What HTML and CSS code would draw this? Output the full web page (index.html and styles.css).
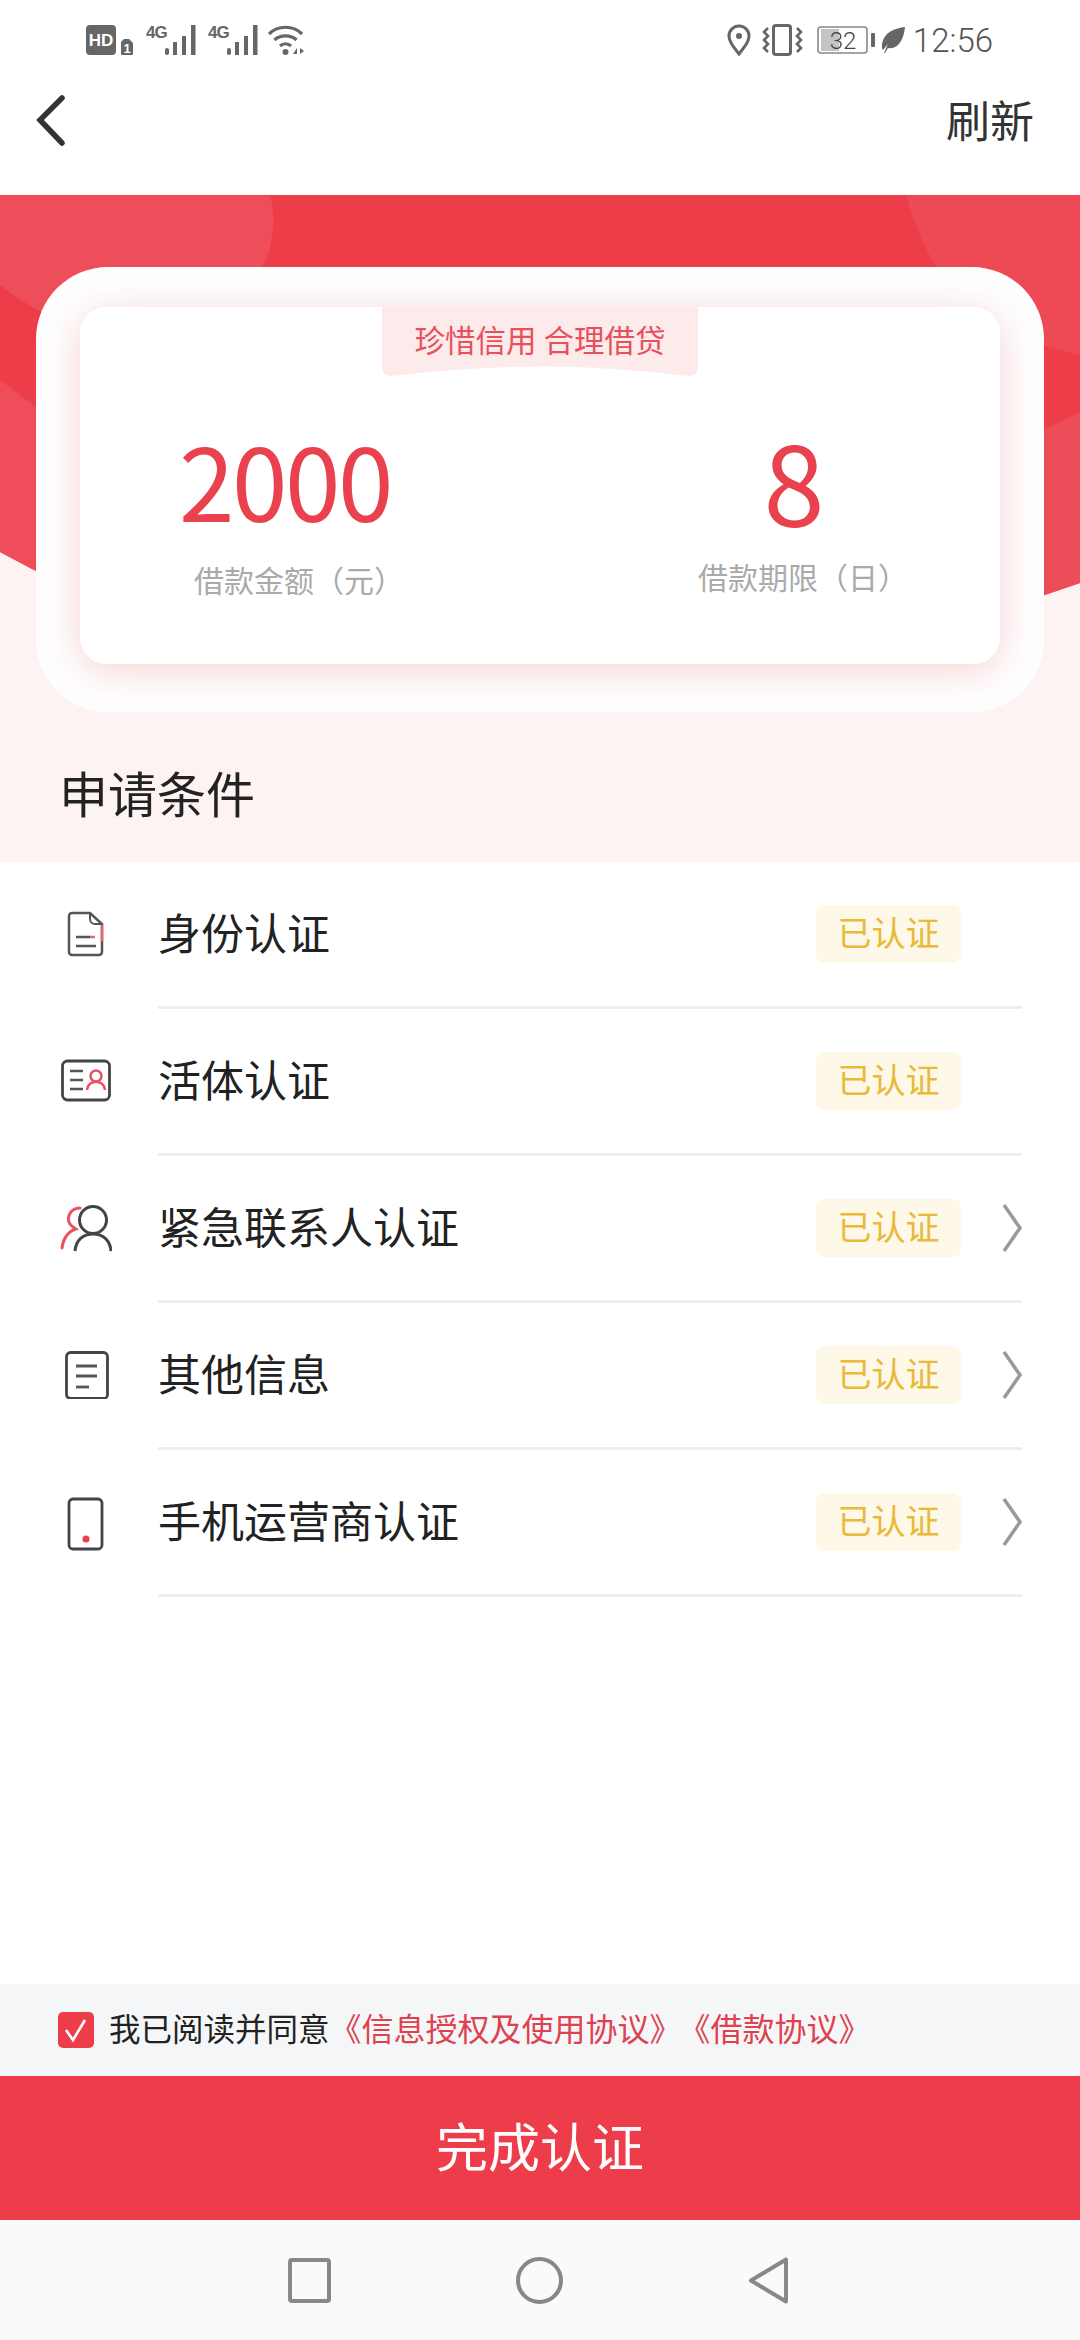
FILE: index.html
```html
<!DOCTYPE html>
<html lang="zh-CN">
<head>
<meta charset="utf-8">
<title>申请条件</title>
<link rel="stylesheet" href="styles.css">
</head>
<body>
<div class="page">
  <div class="status">
    <div class="status-left">
      <svg class="si" width="48" height="32" viewBox="0 0 48 32"><rect x="0" y="1" width="30" height="30" rx="4" fill="#666"/><text x="15" y="22" class="hd">HD</text><path d="M38 15h5l4 4v11a1 1 0 0 1-1 1H36a1 1 0 0 1-1-1V18z" fill="#666"/><text x="41" y="28.5" class="sim">1</text></svg>
      <svg class="si sig" width="50" height="32" viewBox="0 0 50 32"><text x="0" y="14" class="g4">4G</text><rect x="19" y="24" width="4" height="7" rx="2" fill="#666"/><rect x="27" y="18" width="4" height="13" fill="#666"/><rect x="36" y="12" width="4" height="19" fill="#666"/><rect x="45" y="1" width="4.500" height="30" fill="#666"/></svg>
      <svg class="si sig2" width="50" height="32" viewBox="0 0 50 32"><text x="0" y="14" class="g4">4G</text><rect x="19" y="24" width="4" height="7" rx="2" fill="#666"/><rect x="27" y="18" width="4" height="13" fill="#666"/><rect x="36" y="12" width="4" height="19" fill="#666"/><rect x="45" y="1" width="4.500" height="30" fill="#666"/></svg>
      <svg class="si wifi" width="37" height="32" viewBox="0 0 37 32"><path d="M2 10C11 1 26 1 35 10M7.500 16C13 10.500 24 10.500 29.500 16M13 22c3-3 8-3 11 0" fill="none" stroke="#666" stroke-width="3.200"/><circle cx="18.500" cy="28" r="3" fill="#666"/><path d="M26 30l4-6v6zM31 24v7M33 24l4 3-4 3z" fill="#666"/></svg>
    </div>
    <div class="status-right">
      <svg width="24" height="32" viewBox="0 0 24 32"><path d="M12 30C5 21 2 17 2 12a10 10 0 0 1 20 0c0 5-3 9-10 18z" fill="none" stroke="#666" stroke-width="3"/><circle cx="12" cy="12" r="3" fill="#666"/></svg>
      <svg class="vib" width="41" height="32" viewBox="0 0 41 32"><rect x="11.500" y="1.500" width="17" height="29" rx="2.500" fill="none" stroke="#666" stroke-width="3"/><path d="M6 4L2 8l4 4-4 4 4 4-4 4 4 4M35 4l4 4-4 4 4 4-4 4 4 4-4 4" fill="none" stroke="#666" stroke-width="2.600"/></svg>
      <svg class="bat" width="58" height="32" viewBox="0 0 58 32"><rect x="4" y="5" width="18" height="22" fill="#c4c4c4"/><rect x="1" y="3" width="49" height="26" rx="3" fill="none" stroke="#888" stroke-width="1.600"/><text x="26" y="25" class="batt">32</text><rect x="54" y="9" width="4" height="14" rx="1" fill="#666"/></svg>
      <svg class="leaf" width="24" height="32" viewBox="0 0 24 32"><path d="M24 3C14 4 3 8 1 20c-.5 3 0 5 1 6l5-6c-2 4-3 7-4 9h1l3-5c10 2 16-9 17-21z" fill="#666"/></svg>
      <span class="time">12:56</span>
    </div>
  </div>

  <header class="topbar">
    <svg class="back" width="36" height="54" viewBox="0 0 36 54"><path d="M30 3L8 25l22 23" fill="none" stroke="#333" stroke-width="5.500" stroke-linecap="round" stroke-linejoin="miter"/></svg>
    <span class="refresh">刷新</span>
  </header>

  <section class="hero">
    <svg class="hero-bg" width="1080" height="667" viewBox="0 0 1080 667">
      <defs><clipPath id="redclip"><path d="M0 0H1080V388Q454 607 0 357Z"/></clipPath></defs>
      <g clip-path="url(#redclip)">
        <rect width="1080" height="667" fill="#ec3d49"/>
        <path d="M0 0H270C278 30 270 60 262 72C200 170 90 160 0 90Z" fill="#ed4e5a"/>
        <path d="M0 185L36 212V420H0Z" fill="#ee4d59"/>
        <path d="M906 0H1080V160L1043 150C980 130 930 90 906 0Z" fill="#ed4a56"/>
        <path d="M1043 235L1080 217V420H1043Z" fill="#ed4d59"/>
      </g>
    </svg>
    <div class="panel">
      <div class="card">
        <div class="tag">
          <svg class="tag-bg" width="316" height="69" viewBox="0 0 316 69"><path d="M0 0H316V60Q316 69 306 69Q158 50 10 69Q0 69 0 60Z" fill="#fdeaea"/></svg>
          <span class="tag-text">珍惜信用 合理借贷</span>
        </div>
        <div class="stats">
          <div class="stat">
            <div class="num">2000</div>
            <div class="label label-left">借款金额（元）</div>
          </div>
          <div class="stat stat-right">
            <div class="num num-big">8</div>
            <div class="label">借款期限（日）</div>
          </div>
        </div>
      </div>
    </div>
    <h2 class="title">申请条件</h2>
  </section>

  <ul class="list">
    <li class="row">
      <svg class="icon" width="52" height="48" viewBox="0 0 52 48"><path d="M12 3H30L42 14V42a3 3 0 0 1-3 3H12a3 3 0 0 1-3-3V6a3 3 0 0 1 3-3z" fill="none" stroke="#555" stroke-width="2.500"/><path d="M30 3V9a5 5 0 0 0 5 5h7" fill="none" stroke="#555" stroke-width="2"/><path d="M16 27H30M16 36H36" stroke="#555" stroke-width="2.500"/><path d="M30 27H35M42 15V31" stroke="#e9646e" stroke-width="2.500"/></svg>
      <div class="row-body"><span class="row-name">身份认证</span><span class="badge">已认证</span><span class="slot"></span></div>
    </li>
    <li class="row">
      <svg class="icon" width="52" height="48" viewBox="0 0 52 48"><rect x="2.500" y="4" width="47" height="39" rx="5" fill="none" stroke="#444" stroke-width="2.800"/><path d="M10 14H23M10 23H23M10 32H23" stroke="#555" stroke-width="2.500"/><circle cx="36" cy="19" r="5.500" fill="none" stroke="#e9525e" stroke-width="2.500"/><path d="M27 33c1-11 17-11 18 0" fill="none" stroke="#e9525e" stroke-width="2.500"/></svg>
      <div class="row-body"><span class="row-name">活体认证</span><span class="badge">已认证</span><span class="slot"></span></div>
    </li>
    <li class="row">
      <svg class="icon" width="52" height="48" viewBox="0 0 52 48"><circle cx="33" cy="16" r="13.500" fill="none" stroke="#444" stroke-width="3"/><path d="M15 47C16 36 23 30 33 30S50 36 51 47" fill="none" stroke="#444" stroke-width="3"/><path d="M20 4C10 4 6 14 10 20c2 3 5 4 6 5C8 27 3 35 2 44" fill="none" stroke="#e9525e" stroke-width="3" stroke-linecap="round"/></svg>
      <div class="row-body"><span class="row-name">紧急联系人认证</span><span class="badge">已认证</span><span class="slot"><svg class="chev" width="20" height="50" viewBox="0 0 20 50"><path d="M2 2L18 25L2 48" fill="none" stroke="#9a9a9a" stroke-width="3.500"/></svg></span></div>
    </li>
    <li class="row">
      <svg class="icon" width="52" height="48" viewBox="0 0 52 48"><rect x="6.500" y="1.500" width="41" height="46" rx="4" fill="none" stroke="#444" stroke-width="2.800"/><path d="M16 15H37M16 25H37" stroke="#555" stroke-width="2.800"/><path d="M16 36H29" stroke="#555" stroke-width="2.800"/></svg>
      <div class="row-body"><span class="row-name">其他信息</span><span class="badge">已认证</span><span class="slot"><svg class="chev" width="20" height="50" viewBox="0 0 20 50"><path d="M2 2L18 25L2 48" fill="none" stroke="#9a9a9a" stroke-width="3.500"/></svg></span></div>
    </li>
    <li class="row">
      <svg class="icon phone" width="52" height="54" viewBox="0 0 52 54"><rect x="9" y="2" width="33" height="50" rx="4" fill="none" stroke="#444" stroke-width="2.800"/><circle cx="26" cy="42" r="3.500" fill="#e9414e"/></svg>
      <div class="row-body"><span class="row-name">手机运营商认证</span><span class="badge">已认证</span><span class="slot"><svg class="chev" width="20" height="50" viewBox="0 0 20 50"><path d="M2 2L18 25L2 48" fill="none" stroke="#9a9a9a" stroke-width="3.500"/></svg></span></div>
    </li>
  </ul>

  <div class="agree">
    <svg class="check" width="36" height="36" viewBox="0 0 36 36"><rect width="36" height="36" rx="5" fill="#ee3d4a"/><path d="M8 18l7 10L27 8" fill="none" stroke="#fff" stroke-width="2.600"/></svg>
    <span class="agree-text">我已阅读并同意</span><span class="agree-link">《信息授权及使用协议》</span><span class="agree-link agree-link-2">《借款协议》</span>
  </div>
  <button class="submit"><span class="submit-text">完成认证</span></button>
  <nav class="navbar">
    <svg width="43" height="46" viewBox="0 0 43 46"><rect x="2" y="3" width="39" height="41" rx="2" fill="none" stroke="#888" stroke-width="4"/></svg>
    <svg width="47" height="47" viewBox="0 0 47 47"><circle cx="23.500" cy="23.500" r="21.500" fill="none" stroke="#888" stroke-width="4"/></svg>
    <svg width="41" height="47" viewBox="0 0 41 47"><path d="M38 2.500V44.500L3 23.500Z" fill="none" stroke="#888" stroke-width="4" stroke-linejoin="round"/></svg>
  </nav>
</div>
</body>
</html>
```
FILE: styles.css
```css
* { box-sizing: border-box; }
html, body { margin: 0; padding: 0; }
body { font-family: "Noto Sans CJK SC", "Noto Sans", sans-serif; background: #fff; color: #222; }
.page { width: 1080px; height: 2340px; display: flex; flex-direction: column; overflow: hidden; background: #fff; }

.status { height: 80px; flex: none; display: flex; justify-content: space-between; align-items: center; padding: 0 87px 0 86px; }
.status-left, .status-right { display: flex; align-items: center; }
.si { display: block; }
.sig { margin-left: 12px; }
.sig2 { margin-left: 12px; }
.wifi { margin-left: 9px; }
.status-right svg { display: block; }
.vib { margin-left: 11px; }
.bat { margin-left: 14px; }
.leaf { margin-left: 6px; }
.time { font-family: Roboto, sans-serif; font-size: 33px; font-weight: 300; color: #555; margin-left: 8px; line-height: 32px; padding-top: 2px; }
.hd { font-family: "Liberation Sans", sans-serif; font-size: 17px; font-weight: 700; fill: #fff; text-anchor: middle; }
.sim { font-family: "Liberation Sans", sans-serif; font-size: 13px; font-weight: 700; fill: #fff; text-anchor: middle; }
.g4 { font-family: "Liberation Sans Narrow", "Liberation Sans", sans-serif; font-size: 17px; font-weight: 700; fill: #666; letter-spacing: -1px; }
.batt { font-family: Roboto, sans-serif; font-size: 24px; font-weight: 300; fill: #444; text-anchor: middle; }

.topbar { height: 115px; flex: none; display: flex; justify-content: space-between; align-items: flex-start; padding: 9px 46px 0 32px; }
.back { display: block; margin-top: 6px; }
.refresh { font-size: 44px; line-height: 60px; color: #333; }

.hero { position: relative; height: 667px; flex: none; background: #fef3f3; padding-top: 72px; }
.hero-bg { position: absolute; left: 0; top: 0; display: block; }
.panel { position: relative; margin: 0 36px; height: 445px; background: #fff; border-radius: 72px; overflow: hidden; padding: 40px 44px 0; }
.card { height: 357px; background: #fff; border-radius: 26px; box-shadow: 0 6px 40px rgba(224, 120, 125, .34); }
.tag { position: relative; width: 316px; height: 69px; margin: 0 auto; display: flex; justify-content: center; padding-top: 10px; }
.tag-bg { position: absolute; left: 0; top: 0; display: block; }
.tag-text { position: relative; font-size: 30.5px; line-height: 44px; color: #e8505b; }
.stats { display: flex; justify-content: space-between; padding: 53px 92px 0 99px; }
.stat { display: flex; flex-direction: column; }
.stat-right { width: 210px; align-items: center; }
.num { height: 100px; line-height: 100px; font-size: 100px; color: #e9414e; letter-spacing: -2.500px; }
.num-big { font-size: 110px; letter-spacing: 0; padding-right: 18px; }
.label { margin-top: 25px; font-size: 30px; line-height: 44px; color: #aaa; white-space: nowrap; }
.label-left { margin-left: 15px; margin-top: 28px; }
.title { position: relative; margin: 47px 0 0 59px; font-size: 49px; font-weight: 400; line-height: 66px; color: #222; }

.list { list-style: none; margin: 0; padding: 0; flex: 1; }
.row { display: flex; height: 147px; }
.icon { flex: none; align-self: center; display: block; margin-left: 60px; margin-right: 46px; margin-bottom: 3px; }
.phone { margin-bottom: 0; }
.row-body { flex: 1; margin-right: 58px; display: flex; align-items: center; border-bottom: 3px solid #eee; }
.row-name { font-size: 43px; color: #222; line-height: 60px; white-space: nowrap; margin-bottom: 7px; }
.badge { margin-left: auto; width: 145px; height: 58px; border-radius: 8px; background: #fdf8e8; color: #e9b93a; font-size: 34px; line-height: 54px; text-align: center; }
.slot { width: 61px; display: flex; justify-content: flex-end; }
.chev { display: block; }

.agree { height: 92px; flex: none; background: #f5f6f8; display: flex; align-items: center; padding-left: 58px; }
.check { display: block; flex: none; margin-right: 15px; }
.agree-text { font-size: 31.5px; color: #222; white-space: nowrap; margin-bottom: 7px; }
.agree-link { font-size: 32px; color: #e0414e; white-space: nowrap; margin-bottom: 7px; }
.agree-link-2 { margin-left: -3px; }
.submit { height: 144px; flex: none; width: 100%; border: 0; padding: 0 0 8px; background: #ee3d4a; color: #fff; font-family: inherit; font-size: 52px; }
.submit-text { display: block; }
.navbar { height: 120px; flex: none; background: #fafafa; display: flex; align-items: center; gap: 185px; padding-left: 288px; }
.navbar svg { display: block; }
```
